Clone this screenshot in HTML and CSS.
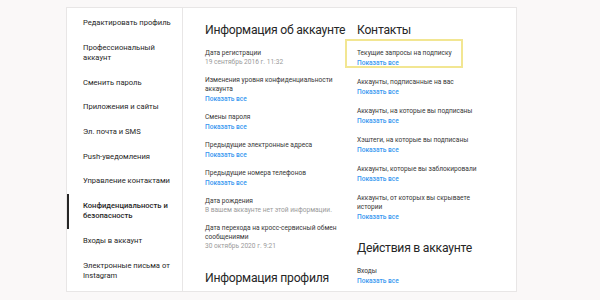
FILE: index.html
```html
<!DOCTYPE html>
<html lang="ru">
<head>
    <meta charset="UTF-8">
    <title>Конфиденциальность и безопасность</title>
    <link rel="stylesheet" href="styles.css">
</head>
<body>
    <div class="card">
        <div class="side-menu">
            <a href="#">Редактировать профиль</a>
            <a href="#">Профессиональный аккаунт</a>
            <a href="#">Сменить пароль</a>
            <a href="#">Приложения и сайты</a>
            <a href="#">Эл. почта и SMS</a>
            <a href="#">Push-уведомления</a>
            <a href="#">Управление контактами</a>
            <a href="#" class="active">Конфиденциальность и безопасность</a>
            <a href="#">Входы в аккаунт</a>
            <a href="#">Электронные письма от Instagram</a>
        </div>

        <div class="content">
            <div class="column col-info">
                <h2>Информация об аккаунте</h2>
                <div class="item">
                    <div class="label">Дата регистрации</div>
                    <div class="value">19 сентябрь 2016 г. 11:32</div>
                </div>
                <div class="item">
                    <div class="label">Изменения уровня конфиденциальности аккаунта</div>
                    <a href="#" class="show-all">Показать все</a>
                </div>
                <div class="item">
                    <div class="label">Смены пароля</div>
                    <a href="#" class="show-all">Показать все</a>
                </div>
                <div class="item">
                    <div class="label">Предыдущие электронные адреса</div>
                    <a href="#" class="show-all">Показать все</a>
                </div>
                <div class="item">
                    <div class="label">Предыдущие номера телефонов</div>
                    <a href="#" class="show-all">Показать все</a>
                </div>
                <div class="item">
                    <div class="label">Дата рождения</div>
                    <div class="value">В вашем аккаунте нет этой информации.</div>
                </div>
                <div class="item">
                    <div class="label">Дата перехода на кросс-сервисный обмен сообщениями</div>
                    <div class="value">30 октябрь 2020 г. 9:21</div>
                </div>
                <h2 class="next-section">Информация профиля</h2>
            </div>

            <div class="column col-contacts">
                <h2>Контакты</h2>
                <div class="item highlighted">
                    <div class="label">Текущие запросы на подписку</div>
                    <a href="#" class="show-all">Показать все</a>
                </div>
                <div class="item">
                    <div class="label">Аккаунты, подписанные на вас</div>
                    <a href="#" class="show-all">Показать все</a>
                </div>
                <div class="item">
                    <div class="label">Аккаунты, на которые вы подписаны</div>
                    <a href="#" class="show-all">Показать все</a>
                </div>
                <div class="item">
                    <div class="label">Хэштеги, на которые вы подписаны</div>
                    <a href="#" class="show-all">Показать все</a>
                </div>
                <div class="item">
                    <div class="label">Аккаунты, которые вы заблокировали</div>
                    <a href="#" class="show-all">Показать все</a>
                </div>
                <div class="item">
                    <div class="label">Аккаунты, от которых вы скрываете истории</div>
                    <a href="#" class="show-all">Показать все</a>
                </div>
                <h2 class="next-section">Действия в аккаунте</h2>
                <div class="item">
                    <div class="label">Входы</div>
                    <a href="#" class="show-all">Показать все</a>
                </div>
            </div>
        </div>
    </div>
</body>
</html>
```

FILE: styles.css
```css
body {
    margin: 0;
    padding: 7px 0 0 0;
    background-color: #faf8f8;
    font-family: Roboto, "Noto Sans", sans-serif;
    color: #262626;
}
.card {
    display: flex;
    width: 451px;
    height: 285px;
    margin-left: 66px;
    background-color: #fff;
    border: 1px solid #e8e6e6;
    box-sizing: border-box;
    overflow: hidden;
}
.side-menu {
    width: 116px;
    flex-shrink: 0;
    border-right: 1px solid #e8e6e6;
    padding-top: 3px;
    box-sizing: border-box;
    display: flex;
    flex-direction: column;
}
.side-menu a {
    display: block;
    color: #262626;
    text-decoration: none;
    font-size: 7.6px;
    line-height: 10.6px;
    padding: 7px 10px 7px 14px;
    border-left: 2px solid transparent;
}
.side-menu a.active {
    border-left-color: #262626;
    font-weight: 500;
}
.content {
    display: flex;
    gap: 13px;
    padding: 13px 0 0 22px;
}
.column {
    display: flex;
    flex-direction: column;
}
.col-info {
    width: 139px;
}
.col-contacts {
    width: 121px;
}
h2 {
    margin: 0 0 10px 0;
    font-size: 12.2px;
    line-height: 18px;
    font-weight: 400;
    letter-spacing: -0.25px;
    color: #262626;
    white-space: nowrap;
}
.col-info h2.next-section {
    margin-top: 9px;
}
.col-contacts h2.next-section {
    margin-top: 7px;
}
.item {
    margin-bottom: 9px;
    font-size: 6.6px;
    line-height: 9px;
}
.label {
    color: #363636;
}
.value {
    color: #9a9a9a;
}
.show-all {
    display: block;
    margin-top: 1px;
    color: #3897f0;
    font-weight: 500;
    text-decoration: none;
}
.highlighted {
    position: relative;
}
.highlighted::before {
    content: "";
    position: absolute;
    left: -12px;
    top: -10px;
    width: 118px;
    height: 29px;
    border: 2px solid rgba(238, 222, 110, 0.75);
    box-sizing: border-box;
}
.col-contacts .item {
    margin-bottom: 10px;
}
```
